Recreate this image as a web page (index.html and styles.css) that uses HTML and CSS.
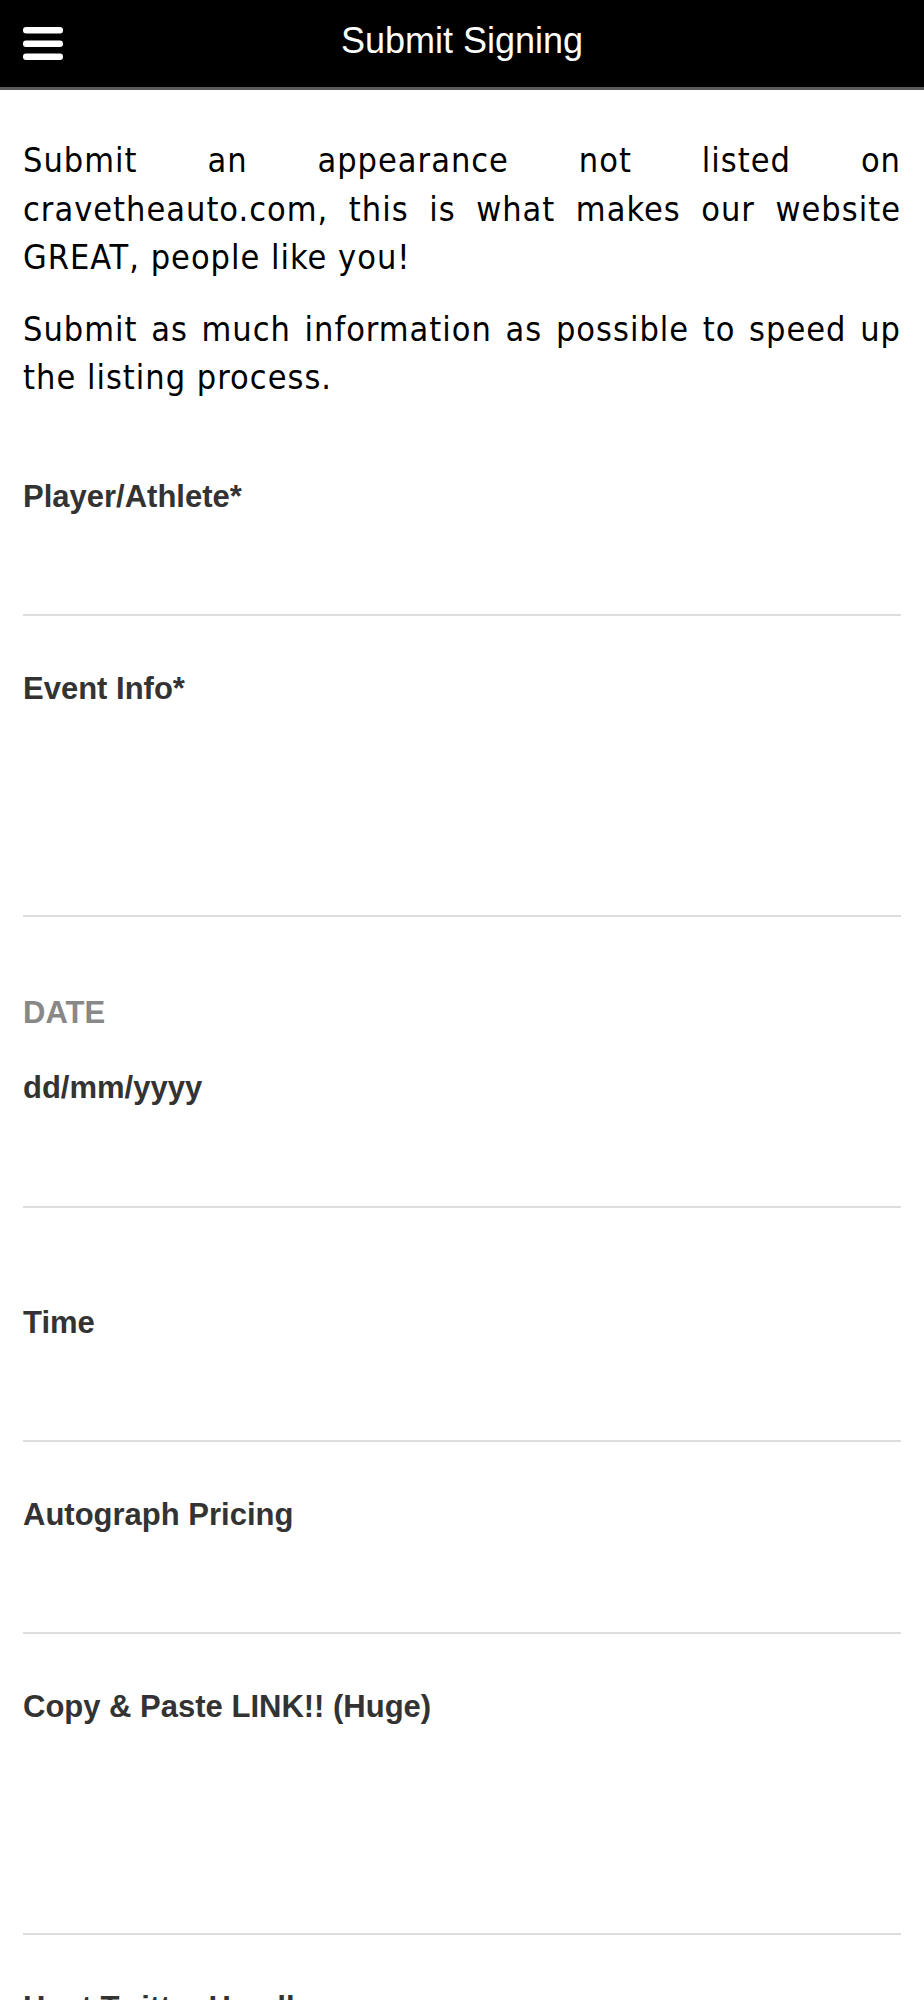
FILE: index.html
```html
<!DOCTYPE html>
<html>
<head>
<meta charset="utf-8">
<link rel="stylesheet" href="styles.css">
</head>
<body>
<header class="topbar">
  <svg class="menu-icon" width="40" height="35" viewBox="0 0 40 35">
    <rect x="0" y="1" width="40" height="6.5" rx="3" fill="#fff"/>
    <rect x="0" y="14.5" width="40" height="6.5" rx="3" fill="#fff"/>
    <rect x="0" y="27.5" width="40" height="6.5" rx="3" fill="#fff"/>
  </svg>
  <h1 class="title">Submit Signing</h1>
</header>
<main class="content">
  <p class="intro">Submit an appearance not listed on cravetheauto.com, this is what makes our website GREAT, people like you!</p>
  <p class="intro">Submit as much information as possible to speed up the listing process.</p>

  <div class="field field-first">
    <div class="label">Player/Athlete*</div>
    <div class="input"></div>
  </div>
  <div class="field">
    <div class="label">Event Info*</div>
    <div class="input input-tall"></div>
  </div>
  <div class="field field-date">
    <div class="label label-muted">DATE</div>
    <div class="input input-date"><span class="value">dd/mm/yyyy</span></div>
  </div>
  <div class="field field-time">
    <div class="label">Time</div>
    <div class="input"></div>
  </div>
  <div class="field">
    <div class="label">Autograph Pricing</div>
    <div class="input"></div>
  </div>
  <div class="field">
    <div class="label">Copy &amp; Paste LINK!! (Huge)</div>
    <div class="input input-tall"></div>
  </div>
  <div class="field">
    <div class="label">Host Twitter Handle</div>
    <div class="input"></div>
  </div>
</main>
</body>
</html>
```
FILE: styles.css
```css
html, body {
  margin: 0;
  padding: 0;
  background: #fff;
}
.topbar {
  position: relative;
  height: 87px;
  background: #000;
  border-bottom: 3px solid #5a5a5a;
  display: flex;
  align-items: center;
  justify-content: center;
}
.menu-icon {
  position: absolute;
  left: 23px;
  top: 26px;
}
.title {
  margin: 0;
  color: #fff;
  font-family: "Liberation Sans", Arial, sans-serif;
  font-weight: normal;
  font-size: 36px;
  line-height: 40px;
  margin-top: -6px;
}
.content {
  padding: 46px 23px 40px 23px;
}
.intro {
  margin: 0 0 23px 0;
  font-family: "DejaVu Sans Condensed", "Liberation Sans Narrow", "DejaVu Sans", sans-serif;
  font-stretch: condensed;
  font-size: 34px;
  letter-spacing: 1px;
  line-height: 48.5px;
  color: #000;
  text-align: justify;
}
.field {
  padding-top: 55px;
}
.field-first {
  padding-top: 54px;
}
.field-date {
  padding-top: 78px;
}
.field-time {
  padding-top: 97px;
}
.label {
  font-family: "Liberation Sans", Arial, sans-serif;
  font-weight: bold;
  font-size: 31px;
  line-height: 36px;
  color: #333;
}
.label-muted {
  color: #888;
}
.input {
  height: 99px;
  border-bottom: 2px solid #ddd;
}
.input-tall {
  height: 208px;
}
.input-date {
  padding-top: 39px;
  height: 136px;
}
.value {
  font-family: "Liberation Sans", Arial, sans-serif;
  font-weight: bold;
  font-size: 31px;
  line-height: 36px;
  color: #333;
}
```
